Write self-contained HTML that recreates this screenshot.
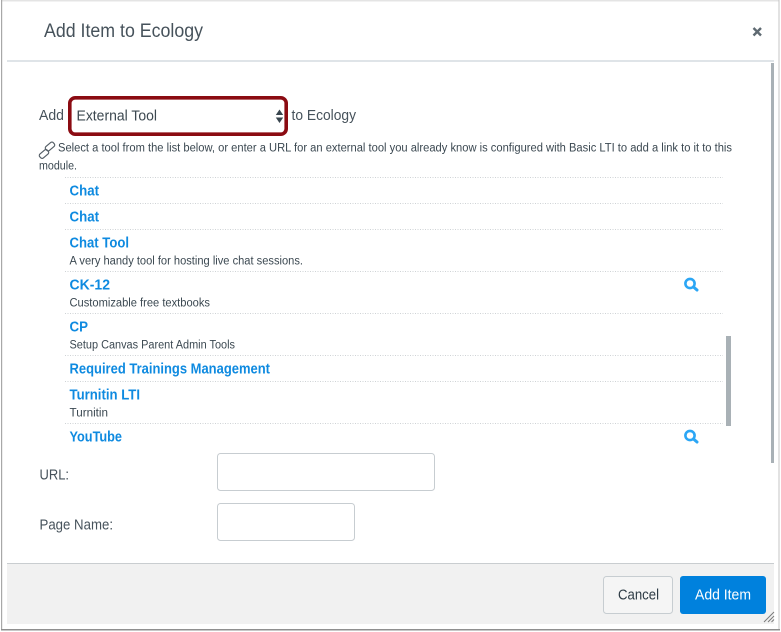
<!DOCTYPE html>
<html><head><meta charset="utf-8"><title>Add Item to Ecology</title>
<style>
html,body{margin:0;padding:0;background:#fff;width:781px;height:632px;overflow:hidden}
svg{display:block}
text{font-family:"Liberation Sans",sans-serif;fill:#2d3b45}
.t{font-weight:bold;font-size:14.5px;fill:#0e8ae0}
.d{font-size:11.5px;fill:#3b4851}
.l{font-size:14.5px;fill:#46525b}
.r{stroke:#cfd3d6;stroke-width:1;stroke-dasharray:1 1.5}
</style></head><body>
<svg width="781" height="632" viewBox="0 0 781 632" xmlns="http://www.w3.org/2000/svg">
<rect x="0" y="0" width="781" height="632" fill="#fff"/>
<rect x="1" y="0" width="778" height="1.5" fill="#e4e4e4"/>
<rect x="1" y="0" width="1.2" height="630" fill="#a8a8a8"/>
<rect x="778.5" y="0" width="1" height="630" fill="#c4c4c4"/>
<rect x="1" y="629" width="779" height="1.5" fill="#8f8f8f"/>

<text x="44" y="37" font-size="19" textLength="159" lengthAdjust="spacingAndGlyphs" style="fill:#46525b">Add Item to Ecology</text>
<path d="M753.5 28l7.5 7.5M761 28l-7.5 7.5" stroke="#5f6a72" stroke-width="2.4" fill="none"/>
<rect x="7" y="60" width="767" height="2" fill="#dfe4e8"/>

<rect x="771" y="63" width="3" height="400" fill="#a9b1b6"/>

<text class="l" x="39" y="120" textLength="25" lengthAdjust="spacingAndGlyphs">Add</text>
<rect x="69.8" y="97.8" width="216.4" height="36.4" rx="5.5" fill="#fff" stroke="#8b0b12" stroke-width="3.6"/>
<text x="76.5" y="120.5" font-size="14.5" textLength="80.5" lengthAdjust="spacingAndGlyphs" style="fill:#3c4850">External Tool</text>
<path d="M275.8 115l3.7-5.5 3.7 5.5zM275.8 117.5l3.7 5.5 3.7-5.5z" fill="#39454e"/>
<text class="l" x="291.5" y="120" textLength="64.5" lengthAdjust="spacingAndGlyphs">to Ecology</text>

<g fill="none" stroke="#555f67" stroke-width="1.2">
<rect x="-5" y="-2.6" width="10" height="5.2" rx="2" transform="translate(44 154) rotate(-40)"/>
<rect x="-5" y="-2.6" width="10" height="5.2" rx="2" transform="translate(50 146.5) rotate(-40)"/>
</g>
<text x="58" y="151.5" font-size="11.5" textLength="674" lengthAdjust="spacingAndGlyphs" style="fill:#3b4851">Select a tool from the list below, or enter a URL for an external tool you already know is configured with Basic LTI to add a link to it to this</text>
<text x="39" y="169.5" font-size="11.5" textLength="38" lengthAdjust="spacingAndGlyphs" style="fill:#3b4851">module.</text>

<line class="r" x1="65" y1="177.5" x2="723" y2="177.5"/>
<line class="r" x1="65" y1="203.5" x2="723" y2="203.5"/>
<line class="r" x1="65" y1="229.5" x2="723" y2="229.5"/>
<line class="r" x1="65" y1="271.5" x2="723" y2="271.5"/>
<line class="r" x1="65" y1="313.5" x2="723" y2="313.5"/>
<line class="r" x1="65" y1="355.5" x2="723" y2="355.5"/>
<line class="r" x1="65" y1="381.5" x2="723" y2="381.5"/>
<line class="r" x1="65" y1="423.5" x2="723" y2="423.5"/>

<text class="t" x="69.5" y="195.5" textLength="29.5" lengthAdjust="spacingAndGlyphs">Chat</text>
<text class="t" x="69.5" y="221.5" textLength="29.5" lengthAdjust="spacingAndGlyphs">Chat</text>
<text class="t" x="69.5" y="247.5" textLength="59.5" lengthAdjust="spacingAndGlyphs">Chat Tool</text>
<text class="d" x="69.5" y="264.5" textLength="233.5" lengthAdjust="spacingAndGlyphs">A very handy tool for hosting live chat sessions.</text>
<text class="t" x="69.5" y="289.5" textLength="40.5" lengthAdjust="spacingAndGlyphs">CK-12</text>
<text class="d" x="69.5" y="306.5" textLength="140.5" lengthAdjust="spacingAndGlyphs">Customizable free textbooks</text>
<text class="t" x="69.5" y="331.5" textLength="18.5" lengthAdjust="spacingAndGlyphs">CP</text>
<text class="d" x="69.5" y="348.5" textLength="165.5" lengthAdjust="spacingAndGlyphs">Setup Canvas Parent Admin Tools</text>
<text class="t" x="69.5" y="373.5" textLength="200.5" lengthAdjust="spacingAndGlyphs">Required Trainings Management</text>
<text class="t" x="69.5" y="399.5" textLength="70.5" lengthAdjust="spacingAndGlyphs">Turnitin LTI</text>
<text class="d" x="69.5" y="416.5" textLength="38.5" lengthAdjust="spacingAndGlyphs">Turnitin</text>
<text class="t" x="69.5" y="441.5" textLength="52.5" lengthAdjust="spacingAndGlyphs">YouTube</text>

<g fill="none" stroke="#2ba6f5">
<circle cx="690" cy="283.5" r="4.6" stroke-width="2.6"/>
<path d="M693.5 287l3.5 3" stroke-width="3" stroke-linecap="round"/>
<circle cx="690" cy="435.5" r="4.6" stroke-width="2.6"/>
<path d="M693.5 439l3.5 3" stroke-width="3" stroke-linecap="round"/>
</g>

<rect x="726" y="336" width="5" height="90" fill="#a9b1b6"/>

<text class="l" x="39.5" y="479.5" textLength="29.5" lengthAdjust="spacingAndGlyphs">URL:</text>
<rect x="217.5" y="453.5" width="217" height="37" rx="3" fill="#fff" stroke="#c7cdd1"/>
<text class="l" x="39.5" y="529.5" textLength="73.5" lengthAdjust="spacingAndGlyphs">Page Name:</text>
<rect x="217.5" y="503.5" width="137" height="37" rx="3" fill="#fff" stroke="#c7cdd1"/>

<rect x="7" y="563" width="767" height="61" fill="#f1f1f1"/>
<rect x="7" y="563" width="767" height="1" fill="#c9cdd0"/>
<rect x="603.5" y="576.5" width="69" height="37" rx="3" fill="#f5f5f5" stroke="#c7cdd1"/>
<text x="618" y="599.5" font-size="14.5" textLength="41" lengthAdjust="spacingAndGlyphs" style="fill:#2d3b45">Cancel</text>
<rect x="680" y="576" width="86" height="38" rx="3" fill="#0081dd"/>
<text x="695" y="599.5" font-size="14.5" textLength="56" lengthAdjust="spacingAndGlyphs" style="fill:#fff">Add Item</text>
<path d="M764 622l10-10M768 622l6-6M771.5 622l2.5-2.5" stroke="#7b7b7b" stroke-width="1" fill="none"/>
</svg>
</body></html>
